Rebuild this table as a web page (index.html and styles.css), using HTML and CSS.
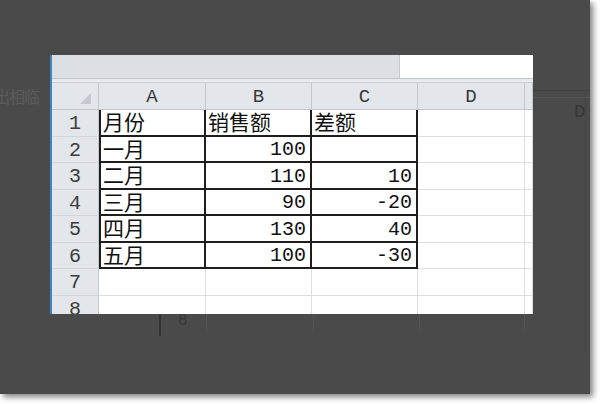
FILE: index.html
```html
<!DOCTYPE html>
<html lang="zh">
<head>
<meta charset="utf-8">
<title>Sheet</title>
<link rel="stylesheet" href="styles.css">
</head>
<body>
<div class="panel">
  <div class="ghost ghost-text">出相临</div>
  <div class="ghost ghost-d">D</div>
  <div class="ghost ghost-h gh1"></div>
  <div class="ghost ghost-h gh2"></div>
  <div class="ghost ghost-v gv0"></div>
  <div class="ghost ghost-v gv1"></div>
  <div class="ghost ghost-v gv2"></div>
  <div class="ghost ghost-v gv3"></div>
  <div class="ghost ghost-v gv4"></div>
  <div class="ghost ghost-v gv5"></div>
  <div class="ghost ghost-8">8</div>

  <div class="sheet">
    <div class="fbar"><div class="fbar-name"></div><div class="fbar-input"></div></div>
    <div class="band"></div>
    <div class="grid">
      <div class="corner"><span class="tri"></span></div>
      <div class="ch">A</div><div class="ch">B</div><div class="ch">C</div><div class="ch">D</div><div class="ch"></div>

      <div class="rh">1</div>
      <div class="c b bl t">月份</div><div class="c b t">销售额</div><div class="c b t">差额</div><div class="c"></div><div class="c"></div>

      <div class="rh">2</div>
      <div class="c b bl t">一月</div><div class="c b n">100</div><div class="c b n"></div><div class="c"></div><div class="c"></div>

      <div class="rh">3</div>
      <div class="c b bl t">二月</div><div class="c b n">110</div><div class="c b n">10</div><div class="c"></div><div class="c"></div>

      <div class="rh">4</div>
      <div class="c b bl t">三月</div><div class="c b n">90</div><div class="c b n">-20</div><div class="c"></div><div class="c"></div>

      <div class="rh">5</div>
      <div class="c b bl t">四月</div><div class="c b n">130</div><div class="c b n">40</div><div class="c"></div><div class="c"></div>

      <div class="rh">6</div>
      <div class="c b bl t">五月</div><div class="c b n">100</div><div class="c b n">-30</div><div class="c"></div><div class="c"></div>

      <div class="rh">7</div>
      <div class="c"></div><div class="c"></div><div class="c"></div><div class="c"></div><div class="c"></div>

      <div class="rh">8</div>
      <div class="c"></div><div class="c"></div><div class="c"></div><div class="c"></div><div class="c"></div>
    </div>
  </div>
</div>
</body>
</html>
```

FILE: styles.css
```css
html, body {
  margin: 0;
  padding: 0;
  background: #ffffff;
}

body {
  width: 600px;
  height: 404px;
  overflow: hidden;
}

.panel {
  position: relative;
  width: 590px;
  height: 394px;
  background: #4a4a4a;
  box-shadow: 3px 3px 6px rgba(0, 0, 0, 0.5);
  padding: 55px 0 0 50px;
  box-sizing: border-box;
}

/* faint content of the page behind the dark overlay */
.ghost {
  position: absolute;
}

.ghost-text {
  left: -6px;
  top: 86px;
  font-family: "Noto Sans CJK SC", sans-serif;
  font-size: 16px;
  line-height: 20px;
  color: #5a5a5a;
  letter-spacing: -1px;
}

.ghost-d {
  left: 574px;
  top: 103px;
  font-family: "Liberation Mono", monospace;
  font-size: 19px;
  line-height: 18px;
  color: #383838;
}

.ghost-h {
  left: 533px;
  width: 57px;
  height: 1px;
  background: #414141;
}

.gh1 { top: 90px; }
.gh2 { top: 97px; background: #555555; }

.ghost-v {
  top: 314px;
  width: 1px;
  height: 17px;
  background: #545454;
}

.gv0 { left: 159px; width: 2px; background: #333333; height: 22px; }
.gv1 { left: 206px; }
.gv2 { left: 313px; }
.gv3 { left: 419px; }
.gv4 { left: 524px; }
.gv5 { left: 585px; top: 92px; height: 260px; background: #444444; }

.ghost-8 {
  left: 178px;
  top: 313px;
  font-family: "Liberation Mono", monospace;
  font-size: 16px;
  line-height: 16px;
  color: #383838;
}

/* spreadsheet screenshot */
.sheet {
  position: relative;
  width: 483px;
  height: 259px;
  overflow: hidden;
  border-left: 2px solid #3d86bf;
  box-sizing: border-box;
  background: #ffffff;
  display: flex;
  flex-direction: column;
}

.fbar {
  display: flex;
  height: 23px;
  flex: none;
}

.fbar-name {
  width: 347px;
  background: #dcdfe4;
  border-right: 1px solid #c6cad0;
}

.fbar-input {
  flex: 1;
  background: #ffffff;
}

.band {
  height: 5px;
  flex: none;
  background: #e9ebee;
  border-top: 1px solid #c2c6cc;
  border-bottom: 1px solid #cbcfd4;
  box-sizing: border-box;
}

.grid {
  display: grid;
  grid-template-columns: 47px 107px 106px 106px 107px 8px;
  grid-template-rows: 27px 27px 26px 27px 26px 27px 26px 27px 26px;
}

.corner {
  display: flex;
  justify-content: flex-end;
  align-items: flex-end;
  padding: 0 7px 5px 0;
  background: #e3e6ea;
  border-right: 1px solid #c4c8cd;
  border-bottom: 1px solid #c4c8cd;
}

.tri {
  width: 0;
  height: 0;
  border-left: 11px solid transparent;
  border-bottom: 11px solid #c5c9cf;
}

.ch {
  display: flex;
  align-items: center;
  justify-content: center;
  background: #e3e6ea;
  border-right: 1px solid #c4c8cd;
  border-bottom: 1px solid #c4c8cd;
  font-family: "Liberation Mono", monospace;
  font-size: 19px;
  line-height: 20px;
  color: #3a3a3a;
  padding-top: 2px;
  box-sizing: border-box;
}

.rh {
  display: flex;
  align-items: center;
  justify-content: center;
  background: #e3e6ea;
  border-right: 1px solid #c4c8cd;
  border-bottom: 1px solid #d2d5da;
  font-family: "Liberation Mono", monospace;
  font-size: 20px;
  line-height: 20px;
  color: #3c3c3c;
  padding-top: 2px;
  box-sizing: border-box;
}

.c {
  display: flex;
  align-items: center;
  border-right: 1px solid #dedede;
  border-bottom: 1px solid #dedede;
  box-sizing: border-box;
  color: #111111;
}

.b {
  border-right: 2px solid #1e1e1e;
  border-bottom: 2px solid #1e1e1e;
}

.bl {
  border-left: 2px solid #1e1e1e;
}

.t {
  font-family: "Noto Sans CJK SC", sans-serif;
  font-size: 21px;
  line-height: 21px;
  padding-left: 2px;
  padding-bottom: 2px;
}

.n {
  justify-content: flex-end;
  font-family: "Liberation Mono", monospace;
  font-size: 20px;
  line-height: 20px;
  padding-right: 4px;
  padding-top: 2px;
}
```
